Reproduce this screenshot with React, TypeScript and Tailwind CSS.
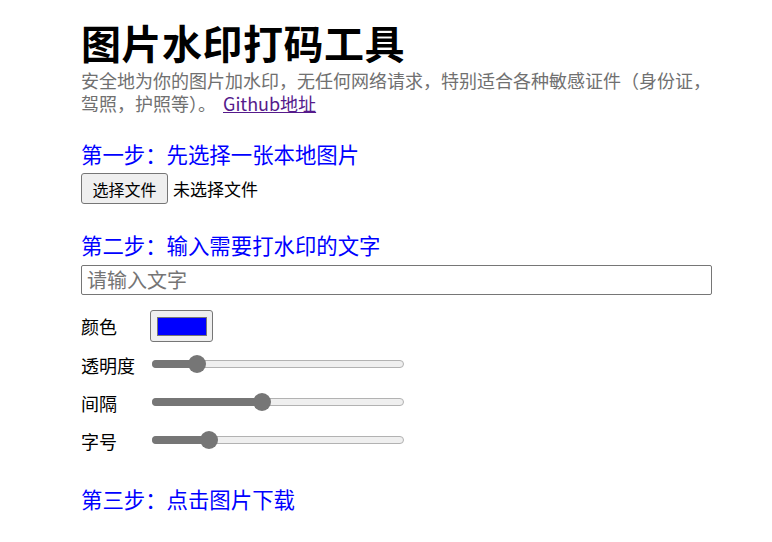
import React from "react";

const font = { fontFamily: '"Noto Sans CJK SC", "Noto Sans", sans-serif' };

function Slider({ thumb }: { thumb: number }) {
  return (
    <div className="relative h-[24px] w-[252px]">
      <div className="absolute left-0 right-0 top-[8px] h-[8px] rounded-full border border-[#b2b2b2] bg-[#efefef]" />
      <div
        className="absolute left-0 top-[8px] h-[8px] rounded-l-full bg-[#767676]"
        style={{ width: thumb }}
      />
      <div
        className="absolute top-[3px] h-[18px] w-[18px] rounded-full bg-[#767676]"
        style={{ left: thumb - 9 }}
      />
    </div>
  );
}

export default function App() {
  return (
    <div className="min-h-[542px] w-[772px] bg-white text-black" style={font}>
      <div className="ml-[81px] w-[631px] pt-[20px]">
        <h1 className="text-[40px] font-bold leading-[44px] tracking-[0.5px]">图片水印打码工具</h1>
        <p className="mt-[5px] text-[18px] leading-[23px] text-[#707070]">
          安全地为你的图片加水印，无任何网络请求，特别适合各种敏感证件（身份证，驾照，护照等）。
          <a href="#" className="ml-[7px] text-[#551a8b] underline">
            Github地址
          </a>
        </p>

        <h3 className="mt-[27px] text-[21.4px] leading-[24px] text-[#0000ff]">第一步：先选择一张本地图片</h3>
        <div className="mt-[7px] flex h-[31px] items-center">
          <button className="h-[31px] w-[87px] rounded-[3px] border border-[#767676] bg-[#efefef] text-[16px] leading-[20px]">
            选择文件
          </button>
          <span className="ml-[5px] text-[17px]">未选择文件</span>
        </div>

        <h3 className="mt-[29px] text-[21.4px] leading-[24px] text-[#0000ff]">第二步：输入需要打水印的文字</h3>
        <input
          className="mt-[8px] block h-[30px] w-[631px] rounded-[2px] border border-[#767676] px-[5px] text-[20px] placeholder:text-[#757575] outline-none"
          placeholder="请输入文字"
        />

        <div className="mt-[15px] flex h-[32px] items-center">
          <span className="w-[69px] text-[18px]">颜色</span>
          <div className="flex h-[32px] w-[63px] items-center justify-center rounded-[3px] border border-[#767676] bg-[#efefef]">
            <div className="h-[19px] w-[50px] border border-[#777777] bg-[#0000ff]" />
          </div>
        </div>

        <div className="mt-[10px] flex flex-col gap-[14px]">
          <div className="flex h-[24px] items-center">
            <span className="w-[71px] pt-[3px] text-[18px]">透明度</span>
            <Slider thumb={45} />
          </div>
          <div className="flex h-[24px] items-center">
            <span className="w-[71px] pt-[3px] text-[18px]">间隔</span>
            <Slider thumb={110} />
          </div>
          <div className="flex h-[24px] items-center">
            <span className="w-[71px] pt-[3px] text-[18px]">字号</span>
            <Slider thumb={57} />
          </div>
        </div>

        <h3 className="mt-[35px] text-[21.4px] leading-[24px] text-[#0000ff]">第三步：点击图片下载</h3>
      </div>
    </div>
  );
}
